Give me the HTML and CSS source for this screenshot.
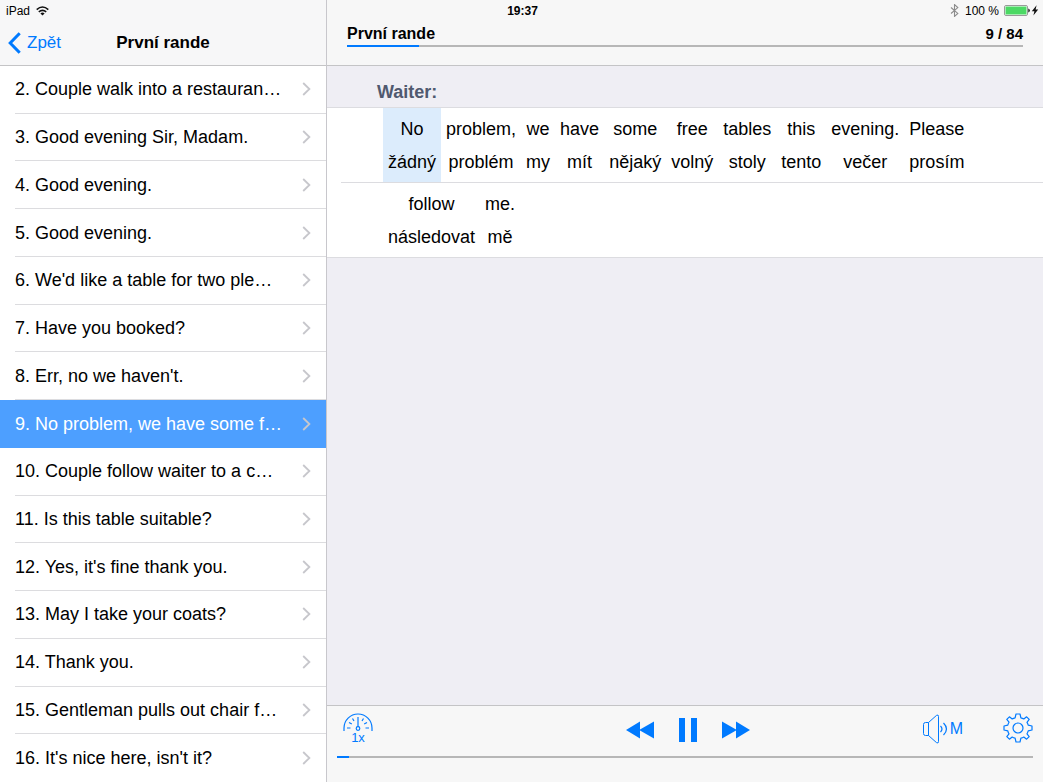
FILE: index.html
```
<!DOCTYPE html>
<html lang="cs">
<head>
<meta charset="utf-8">
<meta name="viewport" content="width=device-width, initial-scale=1">
<title>První rande</title>
<link rel="stylesheet" href="styles.css">
</head>
<body>
<svg class="defs" aria-hidden="true">
  <symbol id="chevron" viewBox="0 0 9 14"><path d="M1.2 1 L7.4 7 L1.2 13" fill="none" stroke="#c7c7cc" stroke-width="1.8"/></symbol>
</svg>
<div class="app">
  <div class="status">
    <div class="status-left">
      <span>iPad</span>
      <svg width="13" height="10" viewBox="0 0 13 10" aria-label="Wi-Fi"><g fill="none" stroke="#111" stroke-width="1.6"><path d="M0.7 3.6 Q6.5 -1.6 12.3 3.6"/><path d="M2.8 5.9 Q6.5 2.7 10.2 5.9"/></g><path d="M4.4 7.4 Q6.5 5.8 8.6 7.4 L6.5 9.6Z" fill="#111"/></svg>
    </div>
    <time class="clock">19:37</time>
    <div class="status-right">
      <svg width="9" height="13" viewBox="0 0 9 13" aria-label="Bluetooth"><path d="M1 3.5 L7.8 9.4 L4.5 12.4 V0.6 L7.8 3.6 L1 9.5" fill="none" stroke="#8c8c8c" stroke-width="1.1"/></svg>
      <span class="percent">100 %</span>
      <svg width="35" height="11" viewBox="0 0 35 11" aria-label="Baterie"><rect x="0.5" y="0.5" width="23" height="10" rx="1.5" fill="#fff" stroke="#999"/><rect x="1.5" y="1.5" width="21" height="8" rx="0.5" fill="#4cd964"/><path d="M24.3 3.4 Q25.8 4 25.8 5.5 T24.3 7.6Z" fill="#111"/><path d="M32.6 0.2 L27.8 6.2 H30.4 L29.4 10.6 L34.2 4.6 H31.6Z" fill="#111"/></svg>
    </div>
  </div>

  <aside class="sidebar">
    <header class="nav">
      <button class="back" type="button">
        <svg width="13" height="22" viewBox="0 0 13 22" aria-hidden="true"><path d="M11.7 1.3 L2.2 11 L11.7 20.7" fill="none" stroke="#007aff" stroke-width="3"/></svg>
        Zpět
      </button>
      <h1>První rande</h1>
    </header>
    <nav class="list">
      <a class="item" href="#2"><span class="cell"><span class="label">2. Couple walk into a restauran…</span><svg class="chev"><use href="#chevron"/></svg></span></a>
      <a class="item" href="#3"><span class="cell"><span class="label">3. Good evening Sir, Madam.</span><svg class="chev"><use href="#chevron"/></svg></span></a>
      <a class="item" href="#4"><span class="cell"><span class="label">4. Good evening.</span><svg class="chev"><use href="#chevron"/></svg></span></a>
      <a class="item" href="#5"><span class="cell"><span class="label">5. Good evening.</span><svg class="chev"><use href="#chevron"/></svg></span></a>
      <a class="item" href="#6"><span class="cell"><span class="label">6. We'd like a table for two ple…</span><svg class="chev"><use href="#chevron"/></svg></span></a>
      <a class="item" href="#7"><span class="cell"><span class="label">7. Have you booked?</span><svg class="chev"><use href="#chevron"/></svg></span></a>
      <a class="item" href="#8"><span class="cell"><span class="label">8. Err, no we haven't.</span><svg class="chev"><use href="#chevron"/></svg></span></a>
      <a class="item selected" href="#9" aria-current="true"><span class="cell"><span class="label">9. No problem, we have some f…</span><svg class="chev"><use href="#chevron"/></svg></span></a>
      <a class="item" href="#10"><span class="cell"><span class="label">10. Couple follow waiter to a c…</span><svg class="chev"><use href="#chevron"/></svg></span></a>
      <a class="item" href="#11"><span class="cell"><span class="label">11. Is this table suitable?</span><svg class="chev"><use href="#chevron"/></svg></span></a>
      <a class="item" href="#12"><span class="cell"><span class="label">12. Yes, it's fine thank you.</span><svg class="chev"><use href="#chevron"/></svg></span></a>
      <a class="item" href="#13"><span class="cell"><span class="label">13. May I take your coats?</span><svg class="chev"><use href="#chevron"/></svg></span></a>
      <a class="item" href="#14"><span class="cell"><span class="label">14. Thank you.</span><svg class="chev"><use href="#chevron"/></svg></span></a>
      <a class="item" href="#15"><span class="cell"><span class="label">15. Gentleman pulls out chair f…</span><svg class="chev"><use href="#chevron"/></svg></span></a>
      <a class="item" href="#16"><span class="cell"><span class="label">16. It's nice here, isn't it?</span><svg class="chev"><use href="#chevron"/></svg></span></a>
    </nav>
  </aside>

  <main class="main">
    <header class="lesson">
      <div class="lesson-row"><h2>První rande</h2><span>9 / 84</span></div>
      <progress class="bar" max="84" value="9" aria-label="Lekce"></progress>
    </header>
    <section class="dialog">
      <h3>Waiter:</h3>
      <div class="lines">
        <div class="line">
          <div class="word active"><span>No</span><span>žádný</span></div>
          <div class="word"><span>problem,</span><span>problém</span></div>
          <div class="word"><span>we</span><span>my</span></div>
          <div class="word"><span>have</span><span>mít</span></div>
          <div class="word"><span>some</span><span>nějaký</span></div>
          <div class="word"><span>free</span><span>volný</span></div>
          <div class="word"><span>tables</span><span>stoly</span></div>
          <div class="word"><span>this</span><span>tento</span></div>
          <div class="word"><span>evening.</span><span>večer</span></div>
          <div class="word"><span>Please</span><span>prosím</span></div>
        </div>
        <div class="line">
          <div class="word"><span>follow</span><span>následovat</span></div>
          <div class="word"><span>me.</span><span>mě</span></div>
        </div>
      </div>
    </section>
    <footer class="player">
      <div class="controls">
        <button class="speed" type="button" aria-label="Rychlost 1x">
          <svg width="30" height="19" viewBox="0 0 30 19" aria-hidden="true"><g fill="none" stroke="#007aff"><path d="M1 18 V15 A14 14 0 0 1 29 15 V18" stroke-width="1.2"/><circle cx="15" cy="15.5" r="1.8" stroke-width="1.2"/><path d="M15 13.7 V4 M4 15 H7.5 M22.5 15 H26 M6 9.5 L8.8 11 M24 9.5 L21.2 11 M9.5 5.5 L11 8 M20.5 5.5 L19 8" stroke-width="1.2"/></g></svg>
          <span>1x</span>
        </button>
        <div class="transport">
          <button type="button" aria-label="Zpět v nahrávce"><svg width="28" height="18" viewBox="0 0 28 18"><path d="M0 9 L14 0.5 V8.6 L28 0.5 V17.5 L14 9.4 V17.5Z" fill="#007aff"/></svg></button>
          <button type="button" aria-label="Pozastavit"><svg width="18" height="24" viewBox="0 0 18 24"><path d="M0 0 H6 V24 H0Z M12 0 H18 V24 H12Z" fill="#007aff"/></svg></button>
          <button type="button" aria-label="Vpřed"><svg width="28" height="18" viewBox="0 0 28 18"><path d="M28 9 L14 0.5 V8.6 L0 0.5 V17.5 L14 9.4 V17.5Z" fill="#007aff"/></svg></button>
        </div>
        <div class="options">
          <button class="sound" type="button" aria-label="Zvuk M">
            <svg width="26" height="30" viewBox="0 0 26 30" aria-hidden="true"><g fill="none" stroke="#007aff"><path d="M5.5 8.5 H2.5 Q0.5 8.5 0.5 10.5 V19.5 Q0.5 21.5 2.5 21.5 H5.5 L13.5 28.6 Q15.5 29.8 15.5 27.6 V2.4 Q15.5 0.2 13.5 1.4Z M5.5 8.5 V21.5"/><path d="M17.5 12 Q20.5 15 17.5 18" stroke-width="1.2"/><path d="M20.5 9 Q26.5 15 20.5 21" stroke-width="1.2"/></g></svg>
            <span>M</span>
          </button>
          <button type="button" aria-label="Nastavení"><svg width="30" height="30" viewBox="0 0 30 30"><g fill="none" stroke="#007aff" stroke-width="1.2" stroke-linejoin="round"><circle cx="15" cy="15" r="5"/><path d="M13 1 H17 L17.9 4.8 Q19.5 5.2 20.8 6 L23.6 3.8 L26.2 6.4 L24 9.3 Q24.9 10.6 25.2 12.1 L29 13 V17 L25.2 17.9 Q24.8 19.5 24 20.8 L26.2 23.6 L23.6 26.2 L20.8 24 Q19.5 24.9 17.9 25.2 L17 29 H13 L12.1 25.2 Q10.5 24.8 9.2 24 L6.4 26.2 L3.8 23.6 L6 20.8 Q5.1 19.5 4.8 17.9 L1 17 V13 L4.8 12.1 Q5.2 10.5 6 9.2 L3.8 6.4 L6.4 3.8 L9.2 6 Q10.5 5.1 12.1 4.8Z"/></g></svg></button>
        </div>
      </div>
      <progress class="bar" max="60" value="1" aria-label="Pozice"></progress>
    </footer>
  </main>
</div>
</body>
</html>
```
FILE: styles.css
```
* { box-sizing: border-box; }

body {
  margin: 0;
  font-family: "Liberation Sans", Arial, sans-serif;
  font-size: 18px;
  color: #000;
}

h1, h2, h3 { margin: 0; font-weight: bold; }

button {
  display: flex;
  align-items: center;
  padding: 0;
  border: 0;
  background: none;
  font: inherit;
  color: #007aff;
}

svg { display: block; flex: none; }
.defs { width: 0; height: 0; position: absolute; }

/* The status row shares its grid area with the tops of both panes */
.app {
  display: grid;
  grid-template-columns: 327px 1fr;
  grid-template-rows: 20px 1fr;
  min-height: 100vh;
}

.status {
  grid-area: 1 / 1 / 2 / 3;
  z-index: 1;
  display: grid;
  grid-template-columns: 1fr auto 1fr;
  align-items: center;
  padding: 1px 4px 0 6px;
  font-size: 12px;
}
.status-left { display: flex; align-items: center; gap: 6px; }
.clock { font-weight: bold; }
.status-right { display: flex; align-items: center; justify-content: flex-end; gap: 5px; }
.percent { margin-left: 1px; }

.sidebar {
  grid-area: 1 / 1 / 3 / 2;
  display: flex;
  flex-direction: column;
  border-right: 1px solid #c8c7cc;
  background: #fff;
}

.nav {
  display: grid;
  grid-template-columns: 1fr auto 1fr;
  align-items: center;
  height: 66px;
  padding: 21px 8px 0;
  border-bottom: 1px solid #c4c4c6;
  background: #f7f7f8;
  font-size: 17px;
}
.nav h1 { font-size: 17px; }
.back { gap: 6px; }

.list { flex: 1; display: flex; flex-direction: column; }
.item {
  flex: 1;
  display: flex;
  min-height: 44px;
  padding-left: 15px;
  color: #000;
  text-decoration: none;
}
.cell {
  flex: 1;
  display: flex;
  align-items: center;
  justify-content: space-between;
  padding-right: 15px;
  border-bottom: 1px solid #dcdcdf;
}
.item:last-child .cell { border-bottom: 0; }
.label { white-space: nowrap; padding-top: 1px; }
.chev { width: 9px; height: 14px; }
.selected { background: #4d9fff; color: #fff; }
.selected .cell { border-color: #4d9fff; }

.main {
  grid-area: 1 / 2 / 3 / 3;
  display: flex;
  flex-direction: column;
  background: #efeef4;
}

.lesson {
  height: 66px;
  padding: 25px 20px 0;
  border-bottom: 1px solid #c4c4c6;
  background: #f7f7f7;
}
.lesson h2 { font-size: 16px; }
.lesson-row {
  display: flex;
  justify-content: space-between;
  align-items: baseline;
  height: 20px;
  font-size: 15px;
  font-weight: bold;
}

.bar {
  display: block;
  width: 100%;
  height: 2px;
  border: 0;
  appearance: none;
  background: #b7b7b7;
}
.bar::-webkit-progress-bar { background: #b7b7b7; }
.bar::-webkit-progress-value { background: #007aff; }
.bar::-moz-progress-bar { background: #007aff; }

.dialog { flex: 1; }
.dialog h3 {
  padding: 16px 50px 5px;
  font-size: 18px;
  line-height: 20px;
  color: #50596f;
}
.lines {
  border: solid #dcdce0;
  border-width: 1px 0;
  background: #fff;
}
.line {
  display: flex;
  margin-left: 14px;
  padding-left: 42px;
}
.line + .line { border-top: 1px solid #dcdce0; }
.word {
  display: flex;
  flex-direction: column;
  align-items: center;
  padding: 5px 5px 3px;
  line-height: 33px;
}
.active { background: #dcecfc; }

.player {
  height: 77px;
  padding: 0 10px;
  border-top: 1px solid #c4c4c6;
  background: #f7f7f7;
}
.controls {
  display: grid;
  grid-template-columns: 1fr auto 1fr;
  align-items: center;
  height: 50px;
  padding: 0 0 6px 6px;
}
.speed {
  flex-direction: column;
  justify-self: start;
  font-size: 13px;
  line-height: 11px;
}
.transport { display: flex; align-items: center; gap: 25px; padding-top: 4px; }
.options { display: flex; align-items: center; justify-content: flex-end; gap: 40px; }
.sound { gap: 1px; font-size: 16px; padding-top: 2px; }
```
